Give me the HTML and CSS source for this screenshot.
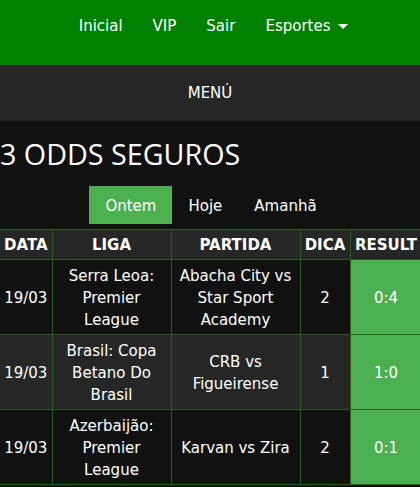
FILE: index.html
```html
<!DOCTYPE html>
<html>
	<head>
		<meta charset="utf-8" />
		<title>3 Odds Seguros</title>
		<link rel="stylesheet" href="styles.css">
	</head>
	<body>
		<div class="topbar">
			<ul class="nav">
				<li><a href="#">Inicial</a></li>
				<li><a href="#">VIP</a></li>
				<li><a href="#">Sair</a></li>
				<li><a href="#">Esportes <i class="caret"></i></a></li>
			</ul>
		</div>
		<div class="menubar">MENÚ</div>
		<h1 class="title">3 ODDS SEGUROS</h1>
		<div class="tabs">
			<a href="#" class="active">Ontem</a>
			<a href="#">Hoje</a>
			<a href="#">Amanhã</a>
		</div>
		<div class="tablebox">
			<table class="odds">
				<colgroup>
					<col class="c-data">
					<col class="c-liga">
					<col class="c-partida">
					<col class="c-dica">
					<col class="c-result">
				</colgroup>
				<tr>
					<th>DATA</th>
					<th>LIGA</th>
					<th>PARTIDA</th>
					<th>DICA</th>
					<th>RESULT</th>
				</tr>
				<tr>
					<td>19/03</td>
					<td>Serra Leoa: Premier League</td>
					<td>Abacha City vs Star Sport Academy</td>
					<td>2</td>
					<td class="win">0:4</td>
				</tr>
				<tr class="alt">
					<td>19/03</td>
					<td>Brasil: Copa Betano Do Brasil</td>
					<td>CRB vs Figueirense</td>
					<td>1</td>
					<td class="win">1:0</td>
				</tr>
				<tr>
					<td>19/03</td>
					<td>Azerbaijão: Premier League</td>
					<td>Karvan vs Zira</td>
					<td>2</td>
					<td class="win">0:1</td>
				</tr>
			</table>
		</div>
	</body>
</html>
```

FILE: styles.css
```css
*{margin: 0;padding: 0;list-style: none;text-decoration: none;box-sizing: border-box;}
body{background: #111;color: #fff;font-family: "DejaVu Sans", Verdana, sans-serif;font-size: 15px;overflow-x: hidden;}
a{color: #fff;}
.topbar{background: #008000;height: 65px;}
.topbar > .nav{display: flex;justify-content: center;height: 50px;padding-left: 7px;}
.topbar > .nav > li > a{display: block;padding: 1px 15px 0;line-height: 50px;}
.caret{display: inline-block;width: 0;height: 0;margin-left: 3px;vertical-align: 2px;border-left: 5px solid transparent;border-right: 5px solid transparent;border-top: 5px solid #fff;}
.menubar{background: #262626;height: 56px;padding-top: 1px;line-height: 55px;text-align: center;}
.title{font-family: "Open Sans", sans-serif;font-weight: normal;font-size: 28.7px;line-height: 40px;margin-top: 13px;}
.tabs{display: flex;justify-content: center;margin-top: 12px;padding-left: 2px;}
.tabs > a{display: block;padding: 11px 16px 9px;line-height: 18px;}
.tabs > a.active{background: #4caf50;}
.tablebox{margin-top: 5px;overflow: hidden;}
.odds{border-collapse: collapse;table-layout: fixed;width: 422px;}
.odds th, .odds td{border: 1px solid #2e5c1e;padding: 5px 4px 3px;line-height: 22px;text-align: center;}
.odds th{padding: 4px 4px 3px;}
.odds tr > :first-child{border-left: 0;}
.odds th{background: #262626;font-weight: bold;}
.odds tr.alt{background: #262626;}
.odds td.win{background: #4caf50;}
.c-data{width: 52px;}
.c-liga{width: 119px;}
.c-partida{width: 129px;}
.c-dica{width: 50px;}
.c-result{width: 72px;}
```
